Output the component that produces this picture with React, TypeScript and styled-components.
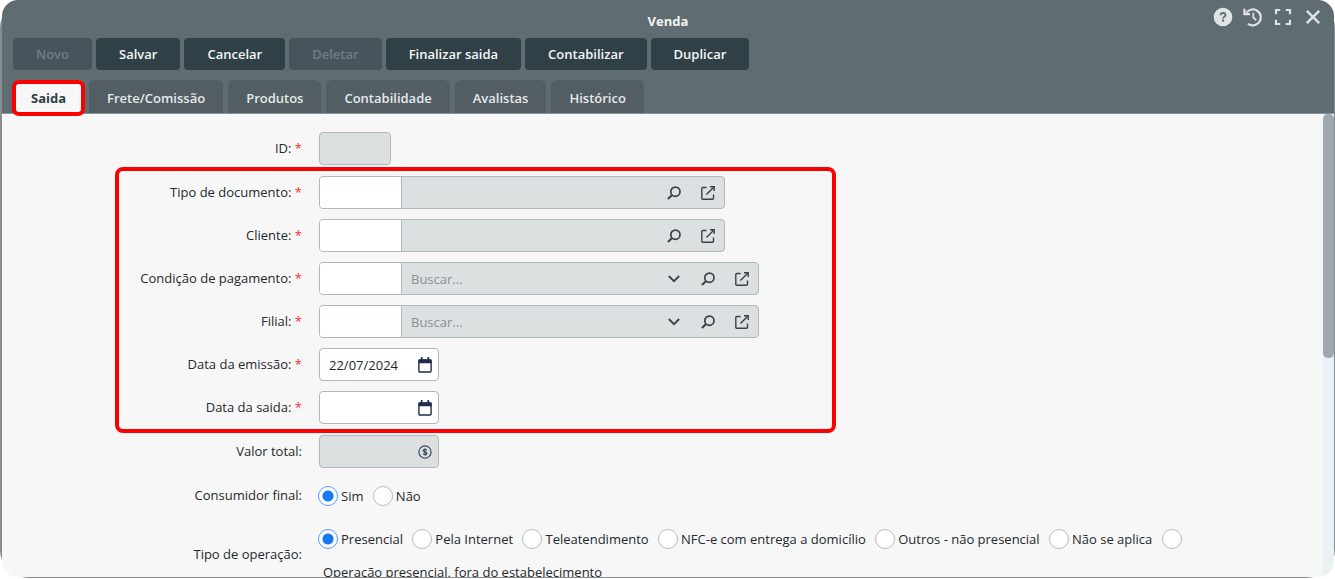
import React from 'react';
import styled, { createGlobalStyle, css } from 'styled-components';

const GlobalStyle = createGlobalStyle`
  *, *::before, *::after { box-sizing: border-box; }
  body {
    margin: 0;
    background: #ffffff;
    color: #24292d;
    font: 13px/18px "Open Sans", "Noto Sans", sans-serif;
  }
  button, input { font: inherit; color: inherit; margin: 0; }
`;

const Backdrop = styled.div`
  height: calc(100vh - 1px);
  padding: 0 1px 1px 2px;
  border-radius: 28px;
  background: #868e93;
`;

const Window = styled.main`
  display: flex;
  flex-direction: column;
  height: 100%;
  overflow: hidden;
  border-radius: 16px;
  background: #f7f7f7;
`;

const Header = styled.header`
  position: relative;
  background: #5f6c72;
  border-bottom: 1px solid #87929a;
`;

const Title = styled.h1`
  margin: 0;
  padding: 12px 0 8px;
  font-size: 13px;
  line-height: 18px;
  font-weight: 700;
  text-align: center;
  color: #f2f4f5;
`;

const WindowActions = styled.div`
  position: absolute;
  top: 6px;
  right: 10px;
  display: flex;
  gap: 8px;
`;

const WindowButton = styled.button`
  display: grid;
  place-items: center;
  width: 22px;
  height: 22px;
  padding: 0;
  border: 0;
  background: none;
  color: #dfe3e4;
`;

const Toolbar = styled.div`
  display: flex;
  gap: 4px;
  padding: 0 11px 10px;
`;

const ToolButton = styled.button`
  height: 32px;
  padding: 0 23px;
  border: 0;
  border-radius: 4px;
  background: #304047;
  color: #f4f6f6;
  font-weight: 600;
  white-space: nowrap;
  &:disabled {
    background: #47545b;
    color: #717d83;
  }
`;

const Tabs = styled.nav`
  display: flex;
  gap: 5px;
  padding: 0 11px;
`;

const Tab = styled.button<{ $active?: boolean }>`
  position: relative;
  height: 33px;
  padding: 2px 18px 0;
  border: 0;
  border-radius: 6px 6px 0 0;
  background: #525e64;
  color: #e6e9ea;
  font-weight: 600;
  white-space: nowrap;
  ${(p) =>
    p.$active &&
    css`
      background: #f7f7f7;
      color: #304047;
      font-weight: 700;
      border-radius: 8px;
      z-index: 1;
      &::after {
        content: '';
        position: absolute;
        inset: 0 -1px -3px;
        border: 4px solid #fa0000;
        border-radius: 7px;
      }
    `}
`;

const Content = styled.div`
  flex: 1;
  min-height: 0;
  display: flex;
`;

const Form = styled.form`
  flex: 1;
  min-width: 0;
  overflow: hidden;
  display: flex;
  flex-direction: column;
  gap: 10px;
  padding: 18px 0;
`;

const Group = styled.div`
  position: relative;
  display: flex;
  flex-direction: column;
  gap: 10px;
  padding: 1px 0;
`;

const Highlight = styled.div`
  position: absolute;
  inset: -8px auto -8px 113px;
  width: 721px;
  border: 4px solid #fa0000;
  border-radius: 8px;
  pointer-events: none;
`;

const Row = styled.div`
  display: grid;
  grid-template-columns: 300px 1fr;
  column-gap: 17px;
  align-items: center;
  min-height: 33px;
  flex-shrink: 0;
`;

const Label = styled.label`
  padding-bottom: 1px;
  text-align: right;
  white-space: nowrap;
`;
const GroupLabel = styled.span`
  text-align: right;
  white-space: nowrap;
`;

const Required = styled.span`
  color: #ff2a2a;
`;

const Field = styled.div<{ $width: number; $muted?: boolean }>`
  display: flex;
  width: ${(p) => p.$width}px;
  height: 33px;
  border: 1px solid #aeb7bc;
  border-radius: 4px;
  overflow: hidden;
  background: ${(p) => (p.$muted ? '#dce0e1' : '#ffffff')};
`;

const Input = styled.input`
  flex: 1;
  min-width: 0;
  width: 100%;
  padding: 0 0 0 9px;
  border: 0;
  outline: 0;
  background: transparent;
  &::placeholder { color: #8b8f91; opacity: 1; }
`;

const CodeInput = styled(Input)`
  flex: 0 0 82px;
  width: 82px;
  border-right: 1px solid #aeb7bc;
  background: #ffffff;
`;

const IconButton = styled.button<{ $compact?: boolean }>`
  display: grid;
  place-items: center;
  flex: none;
  width: ${(p) => (p.$compact ? 26 : 34)}px;
  padding: 0;
  border: 0;
  background: none;
  color: #37434a;
  &:last-child { margin-right: ${(p) => (p.$compact ? 0 : -1)}px; }
`;

const Options = styled.div`
  line-height: 33px;
`;

const Radio = styled.input`
  appearance: none;
  width: 20px;
  height: 20px;
  margin: 0 -1px;
  border: 1px solid #b3bbbf;
  border-radius: 50%;
  background: #ffffff;
  vertical-align: middle;
  &:checked {
    border-color: #4e9bfa;
    background: radial-gradient(circle, #1579f6 5px, #ffffff 6px);
  }
`;

const RadioText = styled.span`
  display: inline-block;
  margin: 0 7px 0 4px;
  line-height: 18px;
  vertical-align: middle;
`;

const ScrollTrack = styled.div`
  width: 11px;
  background: #e9f1f4;
`;

const ScrollThumb = styled.div`
  height: 244px;
  border-radius: 5px;
  background: #a0a8af;
`;

const HelpIcon = () => (
  <svg width="20" height="20" viewBox="0 0 20 20">
    <circle cx="10" cy="10" r="9.3" fill="currentColor" />
    <path d="M7.6 8.2V8c0-1.3 1-2 2.4-2s2.5.8 2.5 2c0 1.7-2.4 1.7-2.4 3.4" fill="none" stroke="#5f6c72" strokeWidth="1.8" />
    <rect x="9" y="12.5" width="2.1" height="2.1" fill="#5f6c72" />
  </svg>
);

const HistoryIcon = () => (
  <svg width="20" height="20" viewBox="0 0 20 20" fill="none" stroke="currentColor" strokeWidth="2.2">
    <path d="M3.4 5.6A8 8 0 1 1 5 16.8" />
    <path d="M1.4 1.8v5.4h5.6" />
    <path d="M10.3 5.8v4.6l3 3" strokeWidth="1.8" />
  </svg>
);

const ExpandIcon = () => (
  <svg width="18" height="18" viewBox="0 0 18 18" fill="none" stroke="currentColor" strokeWidth="2.2">
    <path d="M2 6.2V2h4.2M11.8 2H16v4.2M16 11.8V16h-4.2M6.2 16H2v-4.2" />
  </svg>
);

const CloseIcon = () => (
  <svg width="16" height="16" viewBox="0 0 16 16" fill="none" stroke="currentColor" strokeWidth="2.4">
    <path d="M1.8 1.8l12.4 12.4M14.2 1.8L1.8 14.2" />
  </svg>
);

const SearchIcon = () => (
  <svg width="14" height="14" viewBox="0 0 14 14" fill="none" stroke="currentColor">
    <circle cx="8.4" cy="5.7" r="4.6" strokeWidth="1.7" />
    <path d="M5.1 9.1L.9 13" strokeWidth="2.1" />
  </svg>
);

const OpenIcon = () => (
  <svg width="14" height="14" viewBox="0 0 14 14" fill="none" stroke="currentColor" strokeWidth="1.4">
    <path d="M5.6 1.5H1.8a1 1 0 0 0-1 1v9.7a1 1 0 0 0 1 1h9.7a1 1 0 0 0 1-1V8.4" />
    <path d="M5.4 8.6L13 1" />
    <path d="M9 .8h4.2V5" />
  </svg>
);

const ChevronIcon = () => (
  <svg width="12" height="8" viewBox="0 0 12 8" fill="none" stroke="currentColor" strokeWidth="1.8">
    <path d="M.8 1l5.2 5.2L11.2 1" />
  </svg>
);

const CalendarIcon = () => (
  <svg width="14" height="16" viewBox="0 0 14 16" fill="none" stroke="#1f2b4c">
    <rect x=".9" y="3" width="12.2" height="12" rx="1" strokeWidth="1.4" />
    <path d="M.5 4.4h13" strokeWidth="3.6" />
    <path d="M3.7 0v3.5M10.3 0v3.5" strokeWidth="1.7" />
  </svg>
);

const MoneyIcon = () => (
  <svg width="14" height="14" viewBox="0 0 14 14" fill="none" stroke="#3d4a63">
    <circle cx="7" cy="7" r="6.1" strokeWidth="1.2" />
    <path d="M8.8 5.3C8.5 4.6 7.8 4.3 7 4.3c-1 0-1.8.5-1.8 1.3C5.2 7.4 8.9 6.5 8.9 8.4c0 .8-.8 1.3-1.9 1.3-1 0-1.7-.4-2-1.1M7 3.2v7.6" strokeWidth="1.2" />
  </svg>
);

const commands = [
  { text: 'Novo', disabled: true },
  { text: 'Salvar' },
  { text: 'Cancelar' },
  { text: 'Deletar', disabled: true },
  { text: 'Finalizar saida' },
  { text: 'Contabilizar' },
  { text: 'Duplicar' },
];

const tabs = ['Saida', 'Frete/Comissão', 'Produtos', 'Contabilidade', 'Avalistas', 'Histórico'];

const operations = [
  'Presencial',
  'Pela Internet',
  'Teleatendimento',
  'NFC-e com entrega a domicílio',
  'Outros - não presencial',
  'Não se aplica',
  'Operação presencial, fora do estabelecimento',
];

type FormRowProps = { id: string; label: string; required?: boolean; children: React.ReactNode };

const FormRow = ({ id, label, required, children }: FormRowProps) => (
  <Row>
    <Label htmlFor={id}>
      {label}:{required && <Required> *</Required>}
    </Label>
    {children}
  </Row>
);

const LookupRow = ({ id, label, list }: { id: string; label: string; list?: boolean }) => (
  <FormRow id={id} label={label} required>
    <Field $width={list ? 440 : 406} $muted>
      <CodeInput id={id} />
      <Input aria-label={`${label} - descrição`} placeholder={list ? 'Buscar...' : undefined} readOnly={!list} />
      {list && (
        <IconButton type="button" aria-label="Abrir lista"><ChevronIcon /></IconButton>
      )}
      <IconButton type="button" aria-label="Pesquisar"><SearchIcon /></IconButton>
      <IconButton type="button" aria-label="Abrir cadastro"><OpenIcon /></IconButton>
    </Field>
  </FormRow>
);

const DateRow = ({ id, label, value }: { id: string; label: string; value?: string }) => (
  <FormRow id={id} label={label} required>
    <Field $width={120}>
      <Input id={id} defaultValue={value} />
      <IconButton type="button" $compact aria-label="Abrir calendário"><CalendarIcon /></IconButton>
    </Field>
  </FormRow>
);

const RadioRow = ({ name, label, options }: { name: string; label: string; options: string[] }) => (
  <Row role="radiogroup" aria-labelledby={`${name}-label`}>
    <GroupLabel id={`${name}-label`}>{label}:</GroupLabel>
    <Options>
      {options.map((option, i) => (
        <React.Fragment key={option}>
          <label>
            <Radio type="radio" name={name} defaultChecked={i === 0} />
            <RadioText>{option}</RadioText>
          </label>{' '}
        </React.Fragment>
      ))}
    </Options>
  </Row>
);

export default function App() {
  return (
    <>
      <GlobalStyle />
      <Backdrop>
        <Window>
          <Header>
            <Title>Venda</Title>
            <WindowActions>
              <WindowButton aria-label="Ajuda"><HelpIcon /></WindowButton>
              <WindowButton aria-label="Histórico de alterações"><HistoryIcon /></WindowButton>
              <WindowButton aria-label="Maximizar"><ExpandIcon /></WindowButton>
              <WindowButton aria-label="Fechar"><CloseIcon /></WindowButton>
            </WindowActions>
            <Toolbar>
              {commands.map((c) => (
                <ToolButton key={c.text} disabled={c.disabled}>{c.text}</ToolButton>
              ))}
            </Toolbar>
            <Tabs>
              {tabs.map((t, i) => (
                <Tab key={t} $active={i === 0}>{t}</Tab>
              ))}
            </Tabs>
          </Header>
          <Content>
            <Form>
              <FormRow id="id" label="ID" required>
                <Field $width={72} $muted><Input id="id" readOnly /></Field>
              </FormRow>
              <Group>
                <LookupRow id="tipo-documento" label="Tipo de documento" />
                <LookupRow id="cliente" label="Cliente" />
                <LookupRow id="condicao" label="Condição de pagamento" list />
                <LookupRow id="filial" label="Filial" list />
                <DateRow id="emissao" label="Data da emissão" value="22/07/2024" />
                <DateRow id="saida" label="Data da saida" />
                <Highlight />
              </Group>
              <FormRow id="valor-total" label="Valor total">
                <Field $width={120} $muted>
                  <Input id="valor-total" readOnly />
                  <IconButton type="button" $compact aria-label="Moeda"><MoneyIcon /></IconButton>
                </Field>
              </FormRow>
              <RadioRow name="consumidor" label="Consumidor final" options={['Sim', 'Não']} />
              <RadioRow name="operacao" label="Tipo de operação" options={operations} />
            </Form>
            <ScrollTrack><ScrollThumb /></ScrollTrack>
          </Content>
        </Window>
      </Backdrop>
    </>
  );
}
